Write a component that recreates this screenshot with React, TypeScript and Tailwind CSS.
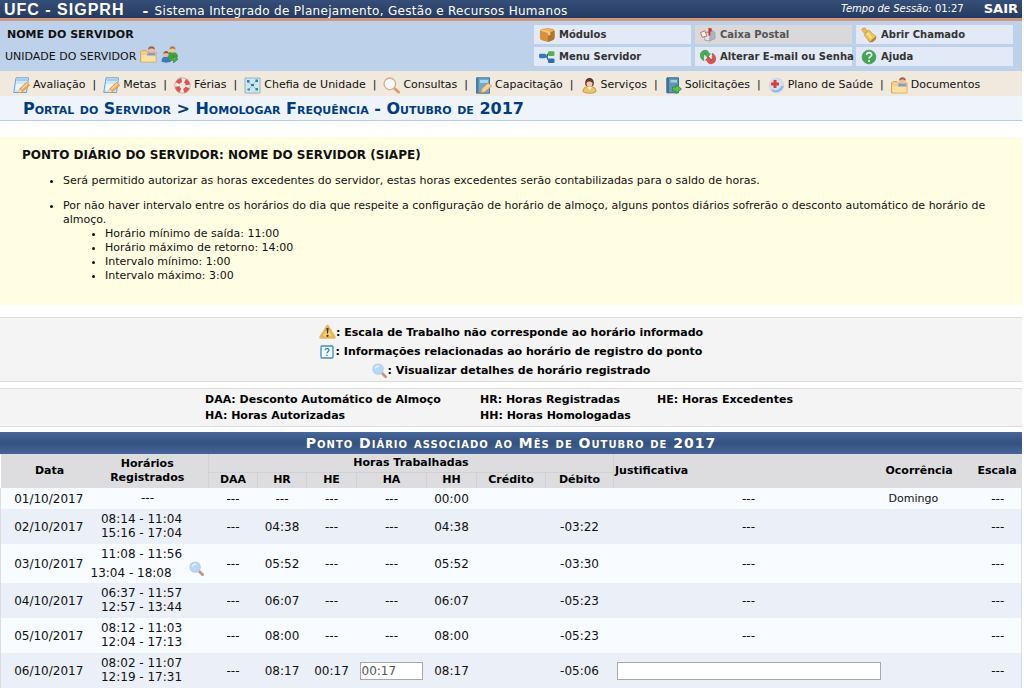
import React from "react";

type IconProps = { className?: string };

const base = "inline-block h-4 w-4 shrink-0";

function FolderUser({ className = base }: IconProps) {
  return (
    <svg viewBox="0 0 17 17" className={className} aria-hidden="true">
      <path d="M0.5 16V6l1.5-1.5h4L7.500 6H16v10z" fill="#f3cd85" stroke="#d9a862" />
      <path d="M1.500 9h14v6.500h-14z" fill="#fbe0a4" />
      <path d="M7 9.500c0-2.500 1.800-3.500 4-3.500s4.500 1 4.500 3.500z" fill="#7b9ccc" />
      <circle cx="11.500" cy="4" r="3" fill="#edbf9b" />
      <path d="M8 4c-.3-5 7.300-5 7 0-1.500-2-5.500-2-7 0z" fill="#a0604c" />
    </svg>
  );
}

function UsersSwap({ className = base }: IconProps) {
  return (
    <svg viewBox="0 0 17 17" className={className} aria-hidden="true">
      <path d="M6 11c0-4 2-5 5-5s6 1 6 5l-3 2z" fill="#3fa23c" />
      <circle cx="11.500" cy="4" r="2.800" fill="#efc499" />
      <path d="M8.500 3.500c0-5 6.500-4 6 .3-1.500-1.600-4-1.800-6-.3z" fill="#b77839" />
      <path d="M0.500 15.500c0-4 2-5 4.500-5s5 1 5 5c-2 1.500-7.500 1.500-9.500 0z" fill="#3b7cc0" />
      <circle cx="5" cy="8.500" r="2.600" fill="#eab98d" />
      <path d="M2.400 8c0-4 5.600-4 5.300 0-1.600-1.300-3.700-1.300-5.300 0z" fill="#8f5326" />
      <path d="M8.500 12h4V9.500L17 13l-4.500 4v-2.500h-4z" fill="#4fae45" stroke="#2c8530" strokeWidth=".6" />
    </svg>
  );
}

function NoteEdit({ className = base }: IconProps) {
  return (
    <svg viewBox="0 0 17 17" className={className} aria-hidden="true">
      <path d="M3 .8h12.500L13.500 15.500.8 15.500z" fill="#cfe7fa" stroke="#6fa3d2" />
      <path d="M3.800 2h10.500l-.3 2H3.500z" fill="#a5cdee" />
      <path d="M3 7h8l-2 6H2.300z" fill="#e9f5fe" />
      <path d="M5.500 15.500L7 11.500l6.500-6 3.200 2.700-6.700 6z" fill="#f5ae50" stroke="#cf8434" strokeWidth=".7" />
      <path d="M8.500 12l6-5.500" stroke="#fbdca8" strokeWidth="1.200" />
      <path d="M5.500 15.500l1-3 2.500 2.200z" fill="#f8e8cc" />
    </svg>
  );
}

function Lifebuoy({ className = base }: IconProps) {
  return (
    <svg viewBox="0 0 17 17" className={className} aria-hidden="true">
      <circle cx="8.500" cy="8.500" r="5.500" fill="none" stroke="#f8f0ee" strokeWidth="4.500" />
      <circle cx="8.500" cy="8.500" r="5.500" fill="none" stroke="#de544e" strokeWidth="4.500" strokeDasharray="5.140 3.500" strokeDashoffset="-2" />
      <circle cx="8.500" cy="8.500" r="7.700" fill="none" stroke="#d98f89" strokeWidth=".8" />
    </svg>
  );
}

function Board({ className = base }: IconProps) {
  return (
    <svg viewBox="0 0 17 17" className={className} aria-hidden="true">
      <path d="M1 1h15v15H1z" fill="#cfe6f1" stroke="#8fb4c6" />
      <path d="M4 5l8 7M12 4l-7 8" stroke="#8bb5cb" strokeWidth=".8" />
      <path d="M3 3h2.500v2.500H3zM11.500 2.500H14V5h-2.500zM7 7h3v2h-3z" fill="#2d7fa0" />
      <path d="M3.500 11.500H6v2H3.500zM11.500 11H14v2.500h-2.500z" fill="#3d8a84" />
    </svg>
  );
}

function Magnifier({ className = base }: IconProps) {
  return (
    <svg viewBox="0 0 17 17" className={className} aria-hidden="true">
      <path d="M11 11l4.500 4" stroke="#e3986c" strokeWidth="3" strokeLinecap="round" />
      <circle cx="6.800" cy="6.800" r="5.800" fill="#f5f8f9" stroke="#e0a98c" strokeWidth="1.300" />
      <path d="M3.500 6c.5-2 2-2.800 3.500-2.500" stroke="#fff" strokeWidth="1.300" fill="none" />
    </svg>
  );
}

function MagnifierBlue({ className = base }: IconProps) {
  return (
    <svg viewBox="0 0 17 17" className={className} aria-hidden="true">
      <path d="M10.500 10.500l4 4" stroke="#c8957f" strokeWidth="3" strokeLinecap="round" />
      <circle cx="6.500" cy="6.500" r="5.500" fill="#b5d9f2" stroke="#b4cfe6" strokeWidth="1.200" />
      <path d="M3.500 6c.3-2 2-3 4-2.500" stroke="#e6f4fd" strokeWidth="1.500" fill="none" />
    </svg>
  );
}

function BookEdit({ className = base }: IconProps) {
  return (
    <svg viewBox="0 0 17 17" className={className} aria-hidden="true">
      <path d="M1.500.8h13v15.400h-13z" fill="#6fa9cb" stroke="#41779a" />
      <path d="M1 1h2.500v15H1z" fill="#4a7c9f" />
      <path d="M5 3h8v3H5z" fill="#a9d4ea" />
      <path d="M6 15.500l1-4 6-5.500 3.800 3-7 6z" fill="#f9cf94" stroke="#d8934d" strokeWidth=".8" />
    </svg>
  );
}

function Person({ className = base }: IconProps) {
  return (
    <svg viewBox="0 0 17 17" className={className} aria-hidden="true">
      <path d="M2 14.500c0-4 3-5 6.500-5s6.500 1 6.500 5c-3 2.300-10 2.300-13 0z" fill="#ecc768" stroke="#ae7c28" strokeWidth=".7" />
      <path d="M6 10h5l-2.500 3z" fill="#fff3d6" />
      <path d="M4.500 8C2 -1.500 15-1.500 12.500 8c-1 2-7 2-8 0z" fill="#59291f" />
      <ellipse cx="8.500" cy="6.500" rx="3" ry="3.700" fill="#f1c9a4" />
      <path d="M5.300 6C5 1.500 12 1.500 11.700 6 10.500 4.500 7.500 3.500 5.300 6z" fill="#6b3326" />
    </svg>
  );
}

function BookArrow({ className = base }: IconProps) {
  return (
    <svg viewBox="0 0 17 17" className={className} aria-hidden="true">
      <path d="M2 .8h11.500v15H2z" fill="#5f97bb" stroke="#3a6c8c" />
      <path d="M1.500 1H4v15H1.500z" fill="#3f7290" />
      <path d="M5.500 3H12v2.500H5.500z" fill="#a2cede" />
      <path d="M7.500 10H11V7.500l5.500 4.500-5.500 4.500V14H7.500z" fill="#5dbb50" stroke="#2f8a34" strokeWidth=".8" />
    </svg>
  );
}

function Health({ className = base }: IconProps) {
  return (
    <svg viewBox="0 0 17 17" className={className} aria-hidden="true">
      <circle cx="8.500" cy="8.500" r="7.200" fill="#cfe3f5" stroke="#c3d6e8" />
      <path d="M4 13c3.500 2.500 9 1 10.500-4" fill="none" stroke="#8fb8e0" strokeWidth="2" />
      <path d="M5.500 3h3v2.500H11v3H8.500V11h-3V8.500H3v-3h2.500z" fill="#e03a3a" />
    </svg>
  );
}

function Box({ className = base }: IconProps) {
  return (
    <svg viewBox="0 0 17 17" className={className} aria-hidden="true">
      <path d="M1 4.500Q1 3 3 2.500L9 1l6 1.500q1.500.5 1.500 2v7q0 1.500-2 2.300L9.500 16 3 14q-2-.5-2-2z" fill="#d8923b" />
      <path d="M1.200 4L9 1l7.200 3L9.500 6.500z" fill="#efb45e" />
      <path d="M9.500 6.500L16.500 4v8q-.5 1.500-2 2l-5 2z" fill="#b8722a" />
      <path d="M4 2.800L12 5.500v3L9.500 9V6.500L2.500 3.500z" fill="#f5cf88" />
    </svg>
  );
}

function Tree({ className = base }: IconProps) {
  return (
    <svg viewBox="0 0 17 17" className={className} aria-hidden="true">
      <path d="M6 8h2.500M11 5Q8.500 5 8.500 8t2.500 4.500" fill="none" stroke="#3b5f7c" strokeWidth="1.500" />
      <rect x="0" y="5" width="7.500" height="4.800" rx="1.500" fill="#3a77bd" />
      <rect x="9.500" y="2.500" width="7" height="5" rx="1.500" fill="#56b04e" />
      <rect x="9.500" y="10" width="7" height="5" rx="1.500" fill="#2f6cb3" />
    </svg>
  );
}

function Mailbox({ className = base }: IconProps) {
  return (
    <svg viewBox="0 0 17 17" className={className} aria-hidden="true">
      <path d="M7 5.500l6-1.500c2 0 3 1.500 3 3.500v5l-6 2.500z" fill="#aeb4bb" stroke="#8d949c" strokeWidth=".6" />
      <path d="M5 14V8.500c0-3.500 5.500-3.500 5.500 0V15z" fill="#dfe2e6" stroke="#888f98" strokeWidth=".7" />
      <path d="M.5 6L5 4l2.500 5.500-5 1.500z" fill="#fbf3e8" stroke="#c5655a" strokeWidth="1" />
      <path d="M9 9V.8l3.500.7v3L11 5v4z" fill="#cf382f" />
    </svg>
  );
}

function Bell({ className = base }: IconProps) {
  return (
    <svg viewBox="0 0 17 17" className={className} aria-hidden="true">
      <path d="M.8 3.500Q.8 1 4 .8L7 4 4 7z" fill="#eebb50" stroke="#c98a2b" strokeWidth=".6" />
      <path d="M3.500 8L8 3.500c3 1 3 3.500 8 6.500L9 16C6.500 11.500 4.500 11 3.500 8z" fill="#f2c552" stroke="#c78d2c" strokeWidth=".8" />
      <path d="M6.500 7c2 1 3.500 3 4.500 5" stroke="#fbe8a2" strokeWidth="2.200" fill="none" />
      <path d="M9 16l7-6c1.500 3-4 7.500-7 6z" fill="#b98030" />
    </svg>
  );
}

function Refresh({ className = base }: IconProps) {
  return (
    <svg viewBox="0 0 17 17" className={className} aria-hidden="true">
      <path d="M4 12.500C-1 10-1 3 4 1.500 7.500.8 9 2 9.500 5h1.700L8 9 4.500 5h2C5.500 3.500 3 6 4 12.500z" fill="#4cae53" stroke="#237a30" strokeWidth=".5" />
      <path d="M13 4.500C18 7 18 14 13 15.500 9.500 16.200 8 15 7.500 12H5.800L9 8l3.500 4h-2c1 1.500 3.500-1 2.500-7.500z" fill="#e0524b" stroke="#9e2823" strokeWidth=".5" />
    </svg>
  );
}

function Help({ className = base }: IconProps) {
  return (
    <svg viewBox="0 0 17 17" className={className} aria-hidden="true">
      <circle cx="8.500" cy="8.500" r="7.300" fill="#3fa651" stroke="#5a9a68" />
      <path d="M5.800 6.500c.3-3.800 6-3.300 5.500 0-.3 1.500-2.500 1.800-2.800 3.700" stroke="#fff" strokeWidth="1.700" fill="none" />
      <circle cx="8.500" cy="12.800" r="1.100" fill="#fff" />
    </svg>
  );
}

function Warning({ className = base }: IconProps) {
  return (
    <svg viewBox="0 0 17 17" className={className} aria-hidden="true">
      <path d="M8.500 2L15.500 13.500h-14z" fill="#f5d36b" stroke="#e5b65c" strokeWidth="2.500" strokeLinejoin="round" />
      <path d="M7.400 4h2.200L9 9.500H8z" fill="#3b2c14" />
      <circle cx="8.500" cy="11.800" r="1.100" fill="#3b2c14" />
    </svg>
  );
}

function Question({ className = base }: IconProps) {
  return (
    <svg viewBox="0 0 14 14" className={className} aria-hidden="true">
      <rect x="1" y="1" width="12" height="12" rx="1" fill="#f4fbff" stroke="#3d8fc6" strokeWidth="1.300" />
      <path d="M5 5.300c.2-2.300 4.200-2.100 4 0-.2 1.200-1.900 1.200-2 2.900" stroke="#2d7ab3" strokeWidth="1.200" fill="none" />
      <circle cx="7" cy="10.300" r=".8" fill="#2d7ab3" />
    </svg>
  );
}

type IconType = (p: IconProps) => React.JSX.Element;

const shortcuts: { label: string; icon: IconType; muted?: boolean }[] = [
  { label: "Módulos", icon: Box },
  { label: "Caixa Postal", icon: Mailbox, muted: true },
  { label: "Abrir Chamado", icon: Bell },
  { label: "Menu Servidor", icon: Tree },
  { label: "Alterar E-mail ou Senha", icon: Refresh },
  { label: "Ajuda", icon: Help },
];

const menu: { label: string; icon: IconType }[] = [
  { label: "Avaliação", icon: NoteEdit },
  { label: "Metas", icon: NoteEdit },
  { label: "Férias", icon: Lifebuoy },
  { label: "Chefia de Unidade", icon: Board },
  { label: "Consultas", icon: Magnifier },
  { label: "Capacitação", icon: BookEdit },
  { label: "Serviços", icon: Person },
  { label: "Solicitações", icon: BookArrow },
  { label: "Plano de Saúde", icon: Health },
  { label: "Documentos", icon: FolderUser },
];

type Day = {
  date: string;
  times: string[];
  details?: boolean;
  hr: string;
  he: string;
  ha: string;
  hh: string;
  debit: string;
  occurrence?: string;
  editable?: boolean;
};

const days: Day[] = [
  { date: "01/10/2017", times: [], hr: "---", he: "---", ha: "---", hh: "00:00", debit: "", occurrence: "Domingo" },
  { date: "02/10/2017", times: ["08:14 - 11:04", "15:16 - 17:04"], hr: "04:38", he: "---", ha: "---", hh: "04:38", debit: "-03:22" },
  { date: "03/10/2017", times: ["11:08 - 11:56", "13:04 - 18:08"], details: true, hr: "05:52", he: "---", ha: "---", hh: "05:52", debit: "-03:30" },
  { date: "04/10/2017", times: ["06:37 - 11:57", "12:57 - 13:44"], hr: "06:07", he: "---", ha: "---", hh: "06:07", debit: "-05:23" },
  { date: "05/10/2017", times: ["08:12 - 11:03", "12:04 - 17:13"], hr: "08:00", he: "---", ha: "---", hh: "08:00", debit: "-05:23" },
  { date: "06/10/2017", times: ["08:02 - 11:07", "12:19 - 17:31"], hr: "08:17", he: "00:17", ha: "00:17", hh: "08:17", debit: "-05:06", editable: true },
];

function Times({ day }: { day: Day }) {
  if (day.times.length === 0) return <div className="pt-[3px] pb-1">---</div>;
  if (day.details) {
    return (
      <div className="py-[3px]">
        <div className="pr-3">{day.times[0]}</div>
        <div className="flex items-start justify-between pl-1 pr-1">
          <span className="pt-[5px]">{day.times[1]}</span>
          <button type="button" aria-label="Visualizar detalhes" className="flex">
            <MagnifierBlue />
          </button>
        </div>
      </div>
    );
  }
  return (
    <div className="pt-[3px] pb-1 pr-3">
      {day.times.map((t) => (
        <div key={t}>{t}</div>
      ))}
    </div>
  );
}

export default function App() {
  return (
    <div className="mr-0.5 bg-white font-['DejaVu_Sans',Verdana,sans-serif] text-[11px] leading-[14px] text-[#111]">
      <header>
        <div className="flex h-[21px] items-center border-b-[3px] border-[#cf9878] bg-linear-to-b from-[#364f78] to-[#253b61] pl-1 pr-1 text-white">
          <h1 className="pt-0.5 font-['Liberation_Sans',Arial,sans-serif] text-[16px] font-bold leading-4 tracking-[1px]">UFC - SIGPRH</h1>
          <span className="ml-[18px] flex grow items-center gap-1.5 pt-1 text-[12px] tracking-wide">
            <b className="text-[14px]">-</b> Sistema Integrado de Planejamento, Gestão e Recursos Humanos
          </span>
          <span className="mr-5 text-[10px]">
            <i>Tempo de Sessão:</i> 01:27
          </span>
          <a href="#sair" className="text-[13px] font-bold">SAIR</a>
        </div>

        <div className="flex h-[50px] items-start justify-between bg-[#bed1ea] pr-[9px]">
          <div>
            <div className="pl-[7px] pt-[7px] text-[11px] font-bold">NOME DO SERVIDOR</div>
            <div className="flex items-end gap-1 pl-[5px] pt-1">
              <span className="leading-3">UNIDADE DO SERVIDOR</span>
              <a href="#dados" aria-label="Dados da unidade"><FolderUser className="block h-[17px] w-[17px]" /></a>
              <a href="#vinculo" aria-label="Trocar vínculo"><UsersSwap className="block h-[17px] w-[17px]" /></a>
            </div>
          </div>
          <nav className="grid grid-cols-[157px_157px_157px] gap-x-1 gap-y-[3px] pt-1" aria-label="Atalhos">
            {shortcuts.map(({ label, icon: Icon, muted }) => (
              <a
                key={label}
                href="#atalho"
                className={
                  muted
                    ? "flex h-[19px] items-center gap-1 whitespace-nowrap bg-[#d9d9d9] pl-[5px] text-[10px] font-bold text-[#555]"
                    : "flex h-[19px] items-center gap-1 whitespace-nowrap bg-[#e2eaf7] pl-[5px] text-[10px] font-bold text-[#333]"
                }
              >
                <Icon />
                {label}
              </a>
            ))}
          </nav>
        </div>

        <nav className="flex h-[25px] items-center whitespace-nowrap bg-[#f0e9de] pl-[13px] pt-[3px]" aria-label="Menu principal">
          {menu.map(({ label, icon: Icon }, i) => (
            <React.Fragment key={label}>
              {i > 0 && <span className="px-[7px]">|</span>}
              <a href="#menu" className="flex items-center gap-[3px]">
                <Icon className="h-[17px] w-[17px]" />
                {label}
              </a>
            </React.Fragment>
          ))}
        </nav>
      </header>

      <h2 className="h-[25px] border-b border-[#b9cce4] bg-[#eff4fb] pl-[23px] text-[16px] font-bold leading-[25px] text-[#003c7f] [font-variant:small-caps]">
        Portal do Servidor &gt; Homologar Frequência - Outubro de 2017
      </h2>

      <section className="mt-4 bg-[#fffde2] pb-[22px] pl-[22px] pr-4 pt-[11px]">
        <h3 className="text-[12px] font-bold">PONTO DIÁRIO DO SERVIDOR: NOME DO SERVIDOR (SIAPE)</h3>
        <ul className="list-disc pl-[41px] pt-3">
          <li>Será permitido autorizar as horas excedentes do servidor, estas horas excedentes serão contabilizadas para o saldo de horas.</li>
          <li className="mt-[11px]">
            Por não haver intervalo entre os horários do dia que respeite a configuração de horário de almoço, alguns pontos diários sofrerão o desconto automático de horário de almoço.
            <ul className="list-disc pl-[42px]">
              <li>Horário mínimo de saída: 11:00</li>
              <li>Horário máximo de retorno: 14:00</li>
              <li>Intervalo mínimo: 1:00</li>
              <li>Intervalo máximo: 3:00</li>
            </ul>
          </li>
        </ul>
      </section>

      <section className="mt-3 flex flex-col items-center border-y border-[#dcdcdc] bg-[#f4f4f4] pt-[5px] pb-px font-bold text-black">
        <div className="flex h-[19px] items-center"><Warning className="h-[17px] w-[17px]" />: Escala de Trabalho não corresponde ao horário informado</div>
        <div className="flex h-[19px] items-center"><Question className="mr-0.5 h-[14px] w-[14px]" />: Informações relacionadas ao horário de registro do ponto</div>
        <div className="flex h-[19px] items-center"><MagnifierBlue />: Visualizar detalhes de horário registrado</div>
      </section>

      <section className="mt-1.5 flex justify-center border-y border-[#dcdcdc] bg-[#f4f4f4] pt-[3px] pb-0.5 font-bold leading-4 text-black">
        <div className="grid grid-cols-[275px_177px_160px]">
          <span>DAA: Desconto Automático de Almoço</span>
          <span>HR: Horas Registradas</span>
          <span>HE: Horas Excedentes</span>
          <span>HA: Horas Autorizadas</span>
          <span>HH: Horas Homologadas</span>
        </div>
      </section>

      <table className="mt-[5px] w-full table-fixed border-collapse text-center text-[12px]">
        <caption className="h-[22px] bg-linear-to-b from-[#48689a] via-[#34517f] to-[#45659a] text-[14px] font-bold leading-[22px] tracking-[1px] text-white [font-variant:small-caps]">
          Ponto Diário associado ao Mês de Outubro de 2017
        </caption>
        <colgroup>
          <col className="w-[86px]" />
          <col className="w-[122px]" />
          <col className="w-[49px]" />
          <col className="w-[49px]" />
          <col className="w-[50px]" />
          <col className="w-[70px]" />
          <col className="w-[50px]" />
          <col className="w-[69px]" />
          <col className="w-[68px]" />
          <col />
          <col className="w-[87px]" />
          <col className="w-[51px]" />
        </colgroup>
        <thead className="bg-[#dddde0] text-[11px] text-black">
          <tr className="h-[18px]">
            <th rowSpan={2} className="p-0 pl-3">Data</th>
            <th rowSpan={2} className="p-0">Horários<br />Registrados</th>
            <th colSpan={7} className="border border-t-0 border-[#d2d2d6] p-0">Horas Trabalhadas</th>
            <th rowSpan={2} className="p-0 pl-px text-left">Justificativa</th>
            <th rowSpan={2} className="p-0 pl-0.5 text-left">Ocorrência</th>
            <th rowSpan={2} className="p-0 pl-0.5">Escala</th>
          </tr>
          <tr className="h-4">
            {["DAA", "HR", "HE", "HA", "HH", "Crédito", "Débito"].map((h) => (
              <th key={h} className="border-x border-[#d2d2d6] p-0">{h}</th>
            ))}
          </tr>
        </thead>
        <tbody className="border-x border-[#dddde0]">
          {days.map((d) => (
            <tr key={d.date} className="odd:bg-[#f8fbff] even:bg-[#ebeff7]">
              <td className="p-0 pl-2.5">{d.date}</td>
              <td className="p-0"><Times day={d} /></td>
              <td className="p-0">---</td>
              <td className="p-0">{d.hr}</td>
              <td className="p-0">{d.he}</td>
              <td className="p-0">
                {d.editable ? (
                  <input
                    aria-label="Horas autorizadas"
                    defaultValue={d.ha}
                    className="ml-[3px] block h-[18px] w-[63px] border border-[#a5a9ae] bg-white px-px text-[12px] text-[#555]"
                  />
                ) : (
                  d.ha
                )}
              </td>
              <td className="p-0">{d.hh}</td>
              <td className="p-0" />
              <td className="p-0">{d.debit}</td>
              <td className="p-0 px-[3px]">
                {d.editable ? (
                  <input aria-label="Justificativa" className="block h-[18px] w-full border border-[#a5a9ae] bg-white px-1" />
                ) : (
                  "---"
                )}
              </td>
              <td className="p-0 pl-[5px] text-left text-[11px]">{d.occurrence}</td>
              <td className="p-0 pl-1">---</td>
            </tr>
          ))}
        </tbody>
      </table>
    </div>
  );
}
